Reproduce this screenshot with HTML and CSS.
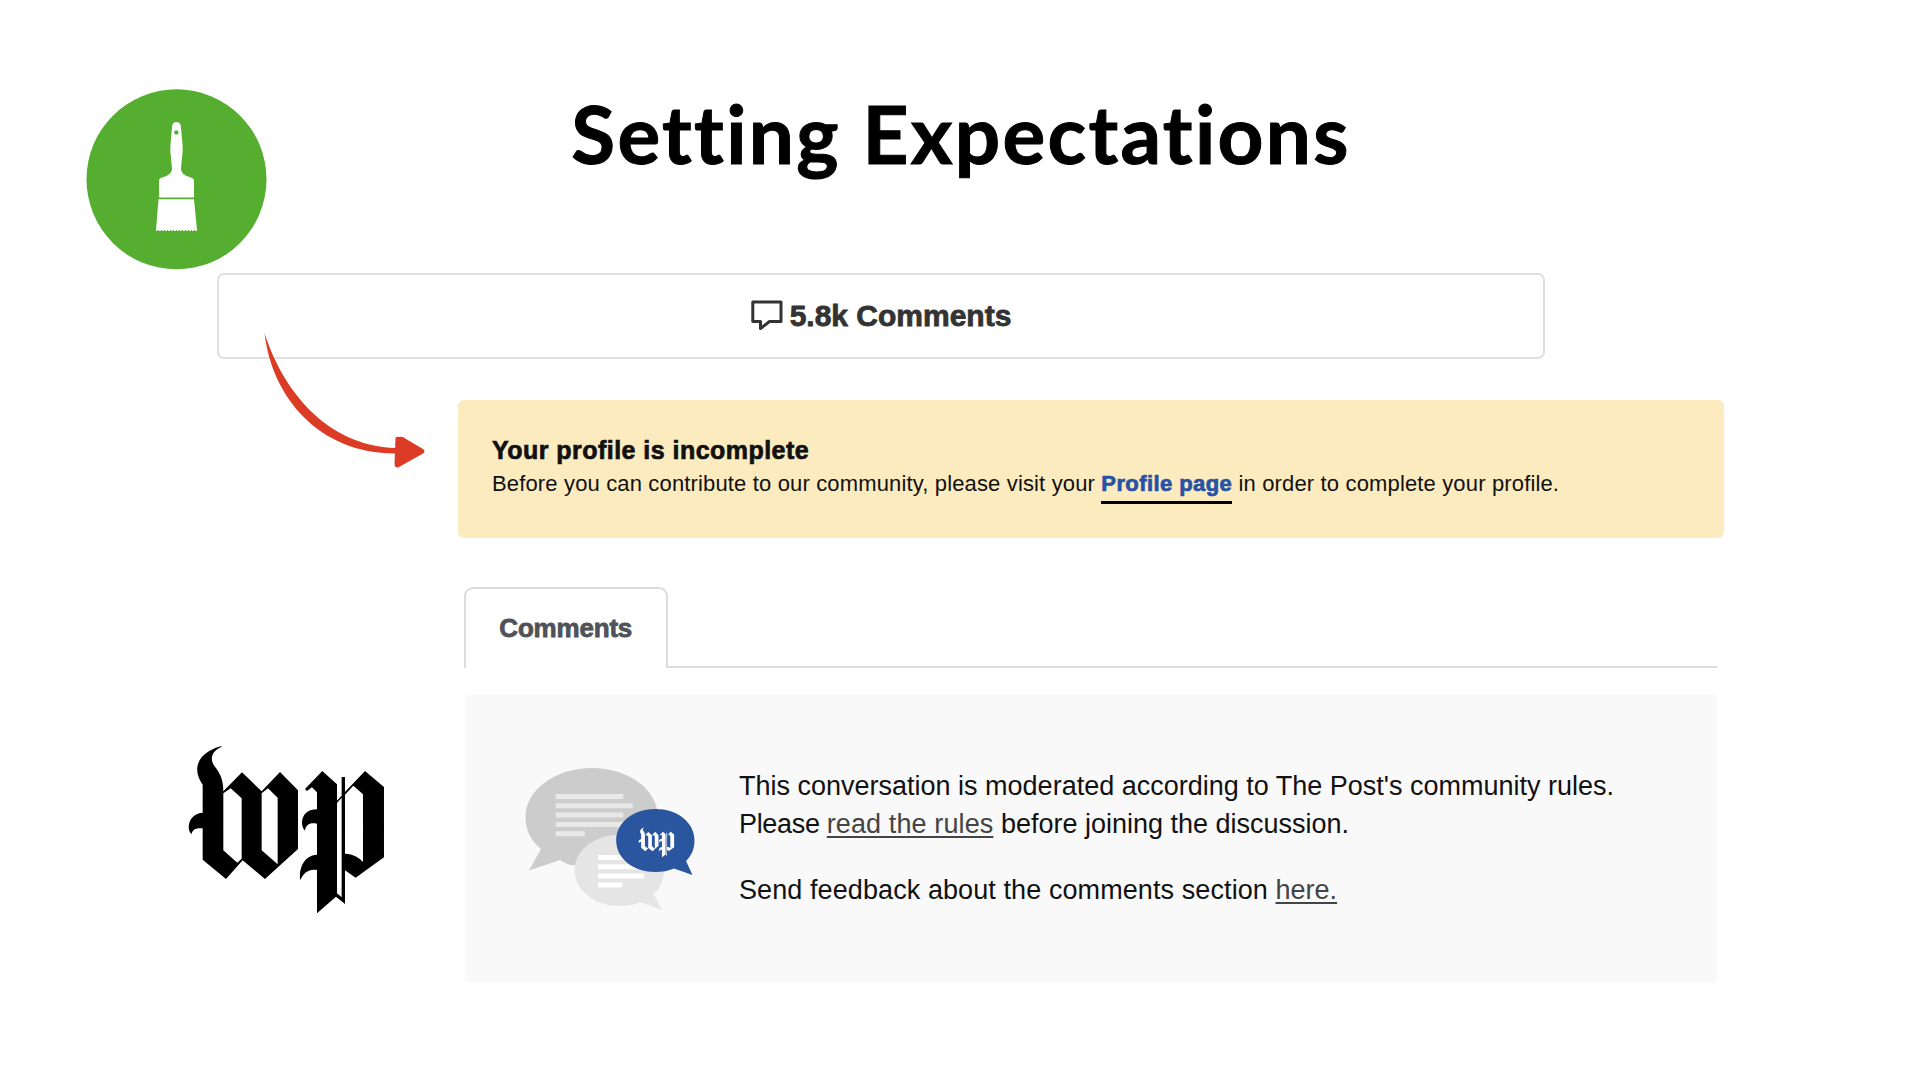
FILE: index.html
```
<!DOCTYPE html>
<html lang="en">
<head>
<meta charset="utf-8">
<title>Setting Expectations</title>
<link rel="stylesheet" href="styles.css">
</head>
<body>
<main class="slide">
  <header class="header">
    <svg class="badge" viewBox="0 0 180 180" aria-hidden="true">
      <circle class="badge-disc" cx="89.500" cy="90.300" r="90"/>
      <path class="brush" transform="translate(-.7 .5)" fill-rule="evenodd" d="M90 32.500c-2.500 0-4 2-4.200 4.500l-1.500 17c-.4 4-.5 8 .2 12l1.200 13c0 4-3 6.500-7 8-3 1.200-6 1.500-6 4.500v16.500h35V91.500c0-3-3-3.300-6-4.500-4-1.500-7-4-7-8l1.200-13c.7-4 .6-8 .2-12l-1.500-17c-.2-2.500-1.700-4.500-4.600-4.500zM90 40.700a2.200 2.200 0 1 1 0 4.400a2.200 2.200 0 1 1 0-4.400z"/>
      <path class="brush" d="M71.500 110.200h35.500L110 141H69z"/>
      <path class="bristles" d="M69 141H110"/>
    </svg>
    <h1 class="title">Setting Expectations</h1>
  </header>

  <section class="count-bar">
    <svg class="count-icon" viewBox="0 0 32 32" aria-hidden="true"><path d="M1.800 2H30v19.500H18.500L9.500 28.500V21.500H1.800z"/></svg>
    <span class="count-label">5.8k Comments</span>
  </section>

  <section class="notice">
    <h2 class="notice-title">Your profile is incomplete</h2>
    <p class="notice-text">Before you can contribute to our community, please visit your <a class="notice-link">Profile page</a> in order to complete your profile.</p>
  </section>

  <nav class="tabs"><span class="tab"><span class="tab-label">Comments</span></span><span class="tab-rule"></span></nav>

  <div class="lower">
    <svg class="logo" viewBox="0 0 230 200" aria-label="wp">
      <g id="wp" transform="scale(.3333)">
        <path d="M156 50C128 61 117 84 133 108C150 129 160 148 160 184L216 127L275 184L330 126L384 181V357L285 447L218 391L168 447L98 389V295C77 294 67 299 65 312C49 303 52 251 98 248V164C71 128 70 73 152 49zM160 190V361L202 398L215 386V205L182 175zM275 190V361L323 403V203L294 175z" fill-rule="evenodd"/>
        <path d="M405 177L457 123L501 163V212L515 197V141H525V186L585 123L642 171V382L557 443L525 421V522L498 500L441 550V420C417 416 399 429 391 451C386 418 400 376 441 374V281C418 277 407 285 405 302C390 288 390 238 441 238V187L426 172L411 183zM501 219V490L515 502V203zM525 194V371C551 372 568 383 579 396V193L550 167z" fill-rule="evenodd"/>
      </g>
    </svg>
    <section class="panel">
      <svg class="bubbles" viewBox="0 0 200 170" aria-hidden="true">
        <path fill="#ccc" d="M82 18C119 18 148 40 148 67C148 96 119 117 82 117C73 117 65 116 57 114L50 110L19 120.500L31 99C21 91 15.500 80 15.500 67C15.500 40 45 18 82 18z"/>
        <path fill="#e8e8e8" d="M45.700 44h67.600v5H45.700zM45.700 53.300h77v5h-77zM45.700 62.600h67.600v5H45.700zM45.700 71.900h67.600v5H45.700zM45.700 81.200h29v5h-29z"/>
        <path fill="#e5e5e5" d="M109.500 84.700C134 84.700 154 100 154 120C154 130 150 138 143.500 144L152 160L130.500 152.300C124 155 117 156 109.500 156C84.500 156 64.700 140 64.700 120C64.700 100 84.500 84.700 109.500 84.700z"/>
        <path fill="#fff" d="M88 105h46v5H88zM88 114.300h46v5H88zM88 123.500h46v5H88zM88 132.500h24.200v5H88z"/>
        <path fill="#2a559f" d="M145.500 59C167 59 184.500 72 184.500 90.500C184.500 99 181.500 105.500 176 111L182.500 125L164 118.500C158.500 121 152 122 145.500 122C124 122 106.200 109 106.200 90.500C106.200 72 124 59 145.500 59z"/>
        <use href="#wp" class="mini-wp" transform="translate(125.200 74.200) scale(.182)"/>
      </svg>
      <div class="copy">
        <p>This conversation is moderated according to The Post's community rules.<br><span class="lead">Please </span><a class="rules-link">read the rules</a> before joining the discussion.</p>
        <p><span class="feedback">Send feedback about the comments section </span><a>here.</a></p>
      </div>
    </section>
  </div>

  <svg class="arrow" viewBox="0 0 300 220" aria-hidden="true">
    <path d="M54.500 73C72 128 115 186 186 188V193.500C110 194 62 138 54.500 73z"/>
    <path d="M185.500 178Q186 176 189 177Q193 176 196 179L213 189Q216 191.500 213 193.500L189 207Q185 209 184.500 204z"/>
  </svg>
</main>
</body>
</html>
```
FILE: styles.css
```
* { box-sizing: border-box; }
body { margin: 0; background: #fff; font-family: "Liberation Sans", Arial, sans-serif; }
.slide { position: relative; width: 1920px; height: 1080px; overflow: hidden; padding-top: 89px; }
.header { display: grid; grid-template-columns: 180px 1fr 180px; padding: 0 87px; height: 184px; }
.badge { width: 180px; height: 180px; overflow: visible; }
.badge-disc { fill: #56ae31; }
.brush { fill: #fff; }
.bristles { stroke: #fff; stroke-width: 2; stroke-dasharray: 1.8 1.2; }
.title { margin: 0; padding-left: 2px; text-align: center; font: 700 80px/89px Lato, sans-serif; letter-spacing: 2.3px; font-variant-ligatures: none; color: #000; -webkit-text-stroke: 1px #000; white-space: nowrap; }
.count-bar { display: flex; align-items: center; justify-content: center; gap: 7px; margin-left: 217px; width: 1328px; height: 86px; border: 2px solid #e0e0e0; border-radius: 7px; }
.count-icon { width: 32px; height: 32px; fill: none; stroke: #333; stroke-width: 3; stroke-linejoin: round; }
.count-label { font-size: 30px; font-weight: 700; color: #333; -webkit-text-stroke: .8px #333; }
.notice { margin: 41px 0 0 458px; width: 1266px; height: 138px; padding: 33px 34px; border-radius: 6px; background: #fcebbf; color: #111; white-space: nowrap; }
.notice-title { margin: 0; font-size: 25px; line-height: 34px; letter-spacing: .46px; -webkit-text-stroke: .7px #111; }
.notice-text { margin: 0; font-size: 22px; line-height: 34px; letter-spacing: .15px; }
.notice-link { display: inline-block; font-weight: 700; letter-spacing: .42px; color: #2752a5; border-bottom: 3px solid #000; -webkit-text-stroke: .7px #2752a5; }
.tabs { display: flex; margin: 49px 0 0 464px; width: 1253px; height: 81px; }
.tab { width: 203.500px; display: flex; align-items: center; justify-content: center; border: 2px solid #dcdcdc; border-bottom: 0; border-radius: 9px 9px 0 0; }
.tab-label { font-size: 26px; font-weight: 700; letter-spacing: -.2px; color: #505259; -webkit-text-stroke: .8px #505259; }
.tab-rule { flex: 1; border-bottom: 2px solid #dcdcdc; }
.lower { display: grid; grid-template-columns: 230px 1252px; column-gap: 65px; margin: 27px 0 0 170px; }
.logo { width: 230px; height: 200px; margin-top: 35px; }
.panel { display: flex; gap: 29px; height: 287px; padding: 55px 45px; background: #f9f9f9; }
.bubbles { width: 200px; height: 170px; flex: none; }
.mini-wp { fill: #fff; }
.copy { padding-top: 17px; font-size: 27px; line-height: 38px; color: #111; white-space: nowrap; }
.copy p { margin: 0 0 28px; }
.copy a { color: #444; text-decoration: underline; text-decoration-thickness: 2px; text-underline-offset: 3px; }
.lead { letter-spacing: -.33px; }
.rules-link { letter-spacing: .11px; }
.feedback { letter-spacing: .09px; }
.arrow { position: absolute; left: 210px; top: 260px; width: 300px; height: 220px; fill: #dc3b26; }
```
